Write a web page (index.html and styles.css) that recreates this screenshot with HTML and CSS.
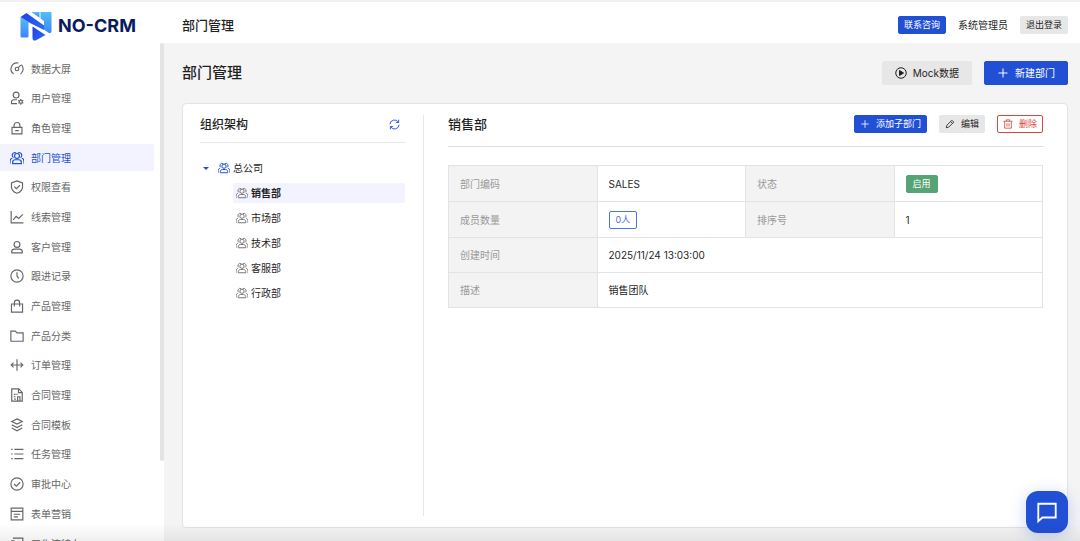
FILE: index.html
```html
<!DOCTYPE html>
<html lang="zh-CN">
<head>
    <meta charset="UTF-8">
    <meta name="viewport" content="width=device-width, initial-scale=1.0">
    <title>部门管理 - NO-CRM</title>
    <link rel="stylesheet" href="styles.css">
</head>
<body>

    <!-- 图标 -->
    <svg class="sprite" aria-hidden="true">
        <symbol id="i-dashboard" viewBox="0 0 24 24"><path d="M6 20.5A10.5 10.5 0 0 1 14.5 1.8M19.5 4.5A10.5 10.5 0 0 1 18 20.5M13.8 10.2L18.5 5.5"/><circle cx="12" cy="12" r="3"/></symbol>
        <symbol id="i-user-set" viewBox="0 0 24 24"><circle cx="10.5" cy="7" r="5"/><path d="M12 15H7c-3 0-4.500 2-4.500 4v2.500H12"/><circle cx="18.500" cy="18.500" r="2.600"/><path d="M18.500 13.500v2.400M18.500 21.100v2.400M14.200 16l2 1.200M20.800 19.800l2 1.200M14.200 21l2-1.200M20.800 17.200l2-1.200"/></symbol>
        <symbol id="i-lock" viewBox="0 0 24 24"><path d="M3.500 11h17v11h-17zM7 11V7.500a5 5 0 0 1 10 0V11M9 16.500h6"/></symbol>
        <symbol id="i-group" viewBox="0 0 24 24"><circle cx="12" cy="8.500" r="4.200"/><path d="M4.500 21.500v-2c0-2.500 2-4.500 4.500-4.500h6c2.500 0 4.500 2 4.500 4.500v2zM10.500 3.500A4.200 4.200 0 1 0 6 11M13.500 3.500A4.200 4.200 0 1 1 18 11M4 12.500C1.500 13 0 15 0 18v4M20 12.500c2.500.500 4 2.500 4 5.500v4"/></symbol>
        <symbol id="i-shield" viewBox="0 0 24 24"><path d="M12 1.500L21.500 5v6.500c0 5.500-4.500 9.500-9.500 11.200-5-1.700-9.500-5.700-9.500-11.200V5zM7.500 11.500l3.500 3.500 6-6"/></symbol>
        <symbol id="i-chart" viewBox="0 0 24 24"><path d="M2 1.500v20.500h21M5.500 17l5-6 4.500 3.500L22 7.500"/></symbol>
        <symbol id="i-user" viewBox="0 0 24 24"><circle cx="12" cy="7.500" r="5"/><path d="M3 22v-2.500c0-2.500 2-4 4.500-4h9c2.500 0 4.500 1.500 4.500 4V22z"/></symbol>
        <symbol id="i-time" viewBox="0 0 24 24"><circle cx="12" cy="12" r="10.500"/><path d="M12 5.500V12l3 4"/></symbol>
        <symbol id="i-bag" viewBox="0 0 24 24"><path d="M2.500 8.500h19v14h-19zM7.500 13V6.500a4.500 4.500 0 0 1 9 0V13"/></symbol>
        <symbol id="i-folder" viewBox="0 0 24 24"><path d="M1.500 3.500H9l3 3h10.500v14.500h-21z"/></symbol>
        <symbol id="i-order" viewBox="0 0 24 24"><path d="M12 2v20M1.500 12h21M6 8l-4 4 4 4M18 8l4 4-4 4"/></symbol>
        <symbol id="i-contract" viewBox="0 0 24 24"><path d="M3 1.500h12l6 6v15H3zM14.500 2v6H21M6.500 11h3M11 11h2M6.500 15h3M7 19h3M13 22v-7h4v7"/></symbol>
        <symbol id="i-layers" viewBox="0 0 24 24"><path d="M12 1.500l9 4.500-9 4.500L3 6zM3 11.500l9 5 9-5M3 17l9 5 9-5"/></symbol>
        <symbol id="i-list" viewBox="0 0 24 24"><path d="M7.500 4H23M7.500 12H23M7.500 20H23M2 4h2.500M2 12h2.500M2 20h2.500"/></symbol>
        <symbol id="i-check" viewBox="0 0 24 24"><circle cx="12" cy="12" r="10.500"/><path d="M7 12l3.800 3.800L17.500 9"/></symbol>
        <symbol id="i-form" viewBox="0 0 24 24"><path d="M2 2h20v20H2zM2 7.500h20M6.500 12.500h11M6.500 17h7"/></symbol>
        <symbol id="i-flow" viewBox="0 0 24 24"><path d="M5 2h17v20H5M2 6.500h6M2 17h6"/></symbol>
        <symbol id="i-play" viewBox="0 0 24 24"><circle cx="12" cy="12" r="10.500"/><path class="solid" d="M9 7l8 5-8 5z"/></symbol>
        <symbol id="i-plus" viewBox="0 0 24 24"><path d="M12 3v18M3 12h18"/></symbol>
        <symbol id="i-edit" viewBox="0 0 24 24"><path d="M3 21l1.500-6L16.500 3 21 7.500 9 19.500zM13.500 6l4.500 4.500"/></symbol>
        <symbol id="i-trash" viewBox="0 0 24 24"><path d="M1 5.500h22M4 5.500V22h16V5.500M8 5V2h8v3M9.500 10v8M14.500 10v8"/></symbol>
        <symbol id="i-refresh" viewBox="0 0 24 24"><path d="M2 11.500A10 10 0 0 1 20.500 7M22 12.500A10 10 0 0 1 3.500 17M21 1.500V7.500h-6M3 22.500v-6h6"/></symbol>
        <symbol id="i-chat" viewBox="0 0 24 24"><path d="M2.500 3h19v15H7l-4.500 4z"/></symbol>
    </svg>

    <div class="layout">
        <!-- 侧边栏 -->
        <aside class="sidebar">
            <a class="logo" href="#">
                <svg class="logo-mark" viewBox="0 0 32 30" aria-hidden="true">
                    <defs>
                        <linearGradient id="g1" x1="0" y1="0" x2="0" y2="1"><stop offset="0" stop-color="#55bdf8"/><stop offset="1" stop-color="#3a86f8"/></linearGradient>
                        <linearGradient id="g2" x1="0" y1="0" x2="1" y2="1"><stop offset="0" stop-color="#1b3fe8"/><stop offset="1" stop-color="#2f6cf3"/></linearGradient>
                    </defs>
                    <path fill="url(#g1)" d="M.5 6l8 5v14q0 1.500-1.500 1.500H2q-1.500 0-1.500-1.500z"/>
                    <path fill="url(#g1)" d="M10.500 1H19.500V7z"/>
                    <path fill="url(#g1)" d="M20.500 1h11v19q0 3-3 1.800L20.500 16z"/>
                    <path fill="#fff" d="M7 .5h3.500L24 10v5z"/>
                    <path fill="url(#g2)" d="M.5 6L6.500 2 24 14.500V19L10 12z"/>
                    <path fill="url(#g2)" d="M12.500 15.500L25.500 24l-9 5q-4 1.800-4-2z"/>
                </svg>
                <span>NO-CRM</span>
            </a>
            <nav class="menu-scroll">
                <ul class="menu">
                    <li><a href="#"><svg class="icon"><use href="#i-dashboard"/></svg>数据大屏</a></li>
                    <li><a href="#"><svg class="icon"><use href="#i-user-set"/></svg>用户管理</a></li>
                    <li><a href="#"><svg class="icon"><use href="#i-lock"/></svg>角色管理</a></li>
                    <li><a href="#" class="active"><svg class="icon"><use href="#i-group"/></svg>部门管理</a></li>
                    <li><a href="#"><svg class="icon"><use href="#i-shield"/></svg>权限查看</a></li>
                    <li><a href="#"><svg class="icon"><use href="#i-chart"/></svg>线索管理</a></li>
                    <li><a href="#"><svg class="icon"><use href="#i-user"/></svg>客户管理</a></li>
                    <li><a href="#"><svg class="icon"><use href="#i-time"/></svg>跟进记录</a></li>
                    <li><a href="#"><svg class="icon"><use href="#i-bag"/></svg>产品管理</a></li>
                    <li><a href="#"><svg class="icon"><use href="#i-folder"/></svg>产品分类</a></li>
                    <li><a href="#"><svg class="icon"><use href="#i-order"/></svg>订单管理</a></li>
                    <li><a href="#"><svg class="icon"><use href="#i-contract"/></svg>合同管理</a></li>
                    <li><a href="#"><svg class="icon"><use href="#i-layers"/></svg>合同模板</a></li>
                    <li><a href="#"><svg class="icon"><use href="#i-list"/></svg>任务管理</a></li>
                    <li><a href="#"><svg class="icon"><use href="#i-check"/></svg>审批中心</a></li>
                    <li><a href="#"><svg class="icon"><use href="#i-form"/></svg>表单营销</a></li>
                    <li><a href="#"><svg class="icon"><use href="#i-flow"/></svg>工作流特办</a></li>
                </ul>
                <span class="scroll-thumb"></span>
            </nav>
        </aside>

        <div class="main">
            <!-- 顶部栏 -->
            <header class="topbar">
                <span class="topbar-title">部门管理</span>
                <div class="topbar-right">
                    <button type="button" class="btn btn-small btn-primary">联系咨询</button>
                    <span>系统管理员</span>
                    <button type="button" class="btn btn-small">退出登录</button>
                </div>
            </header>

            <main class="content">
                <div class="page-head">
                    <h1>部门管理</h1>
                    <div class="page-actions">
                        <button type="button" class="btn"><svg class="icon"><use href="#i-play"/></svg>Mock数据</button>
                        <button type="button" class="btn btn-primary"><svg class="icon"><use href="#i-plus"/></svg>新建部门</button>
                    </div>
                </div>

                <div class="card">
                    <!-- 组织架构 -->
                    <section class="org">
                        <div class="org-head">
                            <h2>组织架构</h2>
                            <button type="button" class="btn-refresh" aria-label="刷新"><svg class="icon"><use href="#i-refresh"/></svg></button>
                        </div>
                        <ul class="tree">
                            <li>
                                <a href="#" class="node root"><span class="arrow"></span><svg class="icon"><use href="#i-group"/></svg>总公司</a>
                                <ul>
                                    <li><a href="#" class="node selected"><svg class="icon"><use href="#i-group"/></svg>销售部</a></li>
                                    <li><a href="#" class="node"><svg class="icon"><use href="#i-group"/></svg>市场部</a></li>
                                    <li><a href="#" class="node"><svg class="icon"><use href="#i-group"/></svg>技术部</a></li>
                                    <li><a href="#" class="node"><svg class="icon"><use href="#i-group"/></svg>客服部</a></li>
                                    <li><a href="#" class="node"><svg class="icon"><use href="#i-group"/></svg>行政部</a></li>
                                </ul>
                            </li>
                        </ul>
                    </section>

                    <!-- 部门详情 -->
                    <section class="detail">
                        <div class="detail-head">
                            <h2>销售部</h2>
                            <div class="detail-actions">
                                <button type="button" class="btn btn-small btn-primary"><svg class="icon"><use href="#i-plus"/></svg>添加子部门</button>
                                <button type="button" class="btn btn-small"><svg class="icon"><use href="#i-edit"/></svg>编辑</button>
                                <button type="button" class="btn btn-small btn-danger"><svg class="icon"><use href="#i-trash"/></svg>删除</button>
                            </div>
                        </div>
                        <table class="info">
                            <tr class="has-tag">
                                <th>部门编码</th><td>SALES</td>
                                <th>状态</th><td><span class="tag tag-success">启用</span></td>
                            </tr>
                            <tr class="has-tag">
                                <th>成员数量</th><td><span class="tag tag-outline">0人</span></td>
                                <th>排序号</th><td>1</td>
                            </tr>
                            <tr><th>创建时间</th><td colspan="3">2025/11/24 13:03:00</td></tr>
                            <tr><th>描述</th><td colspan="3">销售团队</td></tr>
                        </table>
                    </section>
                </div>
            </main>
        </div>
    </div>

    <button type="button" class="chat" aria-label="在线咨询"><svg class="icon"><use href="#i-chat"/></svg></button>

</body>
</html>
```
FILE: styles.css
```css
* {
    box-sizing: border-box;
}

body {
    margin: 0;
    background: #f4f4f4;
    color: #1f1f1f;
    font-family: Inter, "Noto Sans CJK SC", sans-serif;
    font-size: 10px;
    line-height: 16px;
}

/* 底部渐变 */
body::after {
    content: "";
    position: fixed;
    right: 0;
    bottom: 0;
    left: 0;
    height: 18px;
    background: linear-gradient(rgba(0, 0, 0, 0), rgba(0, 0, 0, 0.06));
    pointer-events: none;
}

h1, h2, ul {
    margin: 0;
    padding: 0;
}

h1, h2 {
    font-weight: 500;
}

ul {
    list-style: none;
}

a {
    color: inherit;
    text-decoration: none;
}

.sprite {
    display: none;
}

.icon {
    width: 14px;
    height: 14px;
    flex: none;
    fill: none;
    stroke: currentColor;
    stroke-width: 2;
}

.solid {
    fill: currentColor;
}

.layout {
    display: flex;
    height: 100vh;
    border-top: 2px solid #f1f1f1;
}

/* 侧边栏 */
.sidebar {
    display: flex;
    flex-direction: column;
    width: 164px;
    flex: none;
    background: #fff;
}

.logo {
    display: flex;
    align-items: center;
    gap: 6px;
    height: 41px;
    padding: 6px 0 0 20px;
    flex: none;
    color: #0a1a5c;
    font-size: 18px;
    font-weight: 700;
}

.logo-mark {
    width: 32px;
    height: 30px;
}

.menu-scroll {
    position: relative;
    flex: 1;
    min-height: 0;
    padding: 12px 10px 0 0;
    overflow: hidden;
}

.menu {
    display: flex;
    flex-direction: column;
    justify-content: space-between;
    height: 502px;
}

.menu a {
    display: flex;
    align-items: center;
    gap: 7px;
    height: 27px;
    padding-left: 10px;
    border-radius: 0 2px 2px 0;
    color: #666;
}

.menu a.active {
    background: #f2f3ff;
    color: #2150d4;
}

.menu .icon {
    overflow: visible;
}

.scroll-thumb {
    position: absolute;
    top: 0;
    right: 0;
    width: 4px;
    height: 84%;
    border-radius: 2px;
    background: #e3e3e3;
}

/* 顶部栏 */
.main {
    display: flex;
    flex-direction: column;
    flex: 1;
    min-width: 0;
}

.topbar {
    display: flex;
    align-items: center;
    justify-content: space-between;
    height: 41px;
    padding: 5px 12px 0 18px;
    background: #fff;
}

.topbar-title {
    font-size: 13px;
    font-weight: 500;
}

.topbar-right,
.page-actions,
.detail-actions {
    display: flex;
    align-items: center;
    gap: 12px;
}

/* 按钮 */
.btn {
    display: inline-flex;
    align-items: center;
    justify-content: center;
    gap: 6px;
    height: 24px;
    padding: 0 12px;
    border: 1px solid #e7e7e7;
    border-radius: 2px;
    background: #e7e7e7;
    color: #1f1f1f;
    font: inherit;
    cursor: pointer;
}

.btn .icon {
    width: 12px;
    height: 12px;
}

.btn-small {
    height: 18px;
    padding: 0 5px;
    font-size: 9px;
}

.btn-small .icon {
    width: 10px;
    height: 10px;
}

.btn-primary {
    border-color: #2150d4;
    background: #2150d4;
    color: #fff;
}

.btn-danger {
    border-color: #d54941;
    background: #fff;
    color: #d54941;
}

/* 内容 */
.content {
    display: flex;
    flex-direction: column;
    flex: 1;
    gap: 18px;
    padding: 18px 12px 13px 18px;
}

.page-head {
    display: flex;
    align-items: center;
    justify-content: space-between;
}

.page-head h1 {
    font-size: 15px;
}

.card {
    display: flex;
    flex: 1;
    padding: 11px 24px 11px 17px;
    border: 1px solid #e3e3e3;
    border-radius: 4px;
    background: #fff;
}

/* 组织架构 */
.org {
    width: 224px;
    flex: none;
    padding-right: 18px;
    border-right: 1px solid #e7e7e7;
}

.org-head {
    display: flex;
    align-items: center;
    justify-content: space-between;
    height: 28px;
    padding: 0 5px 8px 0;
    border-bottom: 1px solid #e7e7e7;
}

.org-head h2 {
    font-size: 12px;
}

.btn-refresh {
    display: flex;
    padding: 0;
    border: 0;
    background: none;
    color: #2150d4;
    cursor: pointer;
}

.btn-refresh .icon {
    width: 11px;
    height: 11px;
}

.tree {
    padding-top: 15px;
}

.tree ul {
    padding-left: 33px;
}

.node {
    display: flex;
    align-items: center;
    gap: 3px;
    height: 20px;
    margin-bottom: 5px;
    padding-left: 3px;
    border-radius: 2px;
}

.node .icon {
    width: 12px;
    height: 12px;
    overflow: visible;
    color: #777;
}

.node.root .icon {
    color: #2150d4;
}

.node.selected {
    background: #f2f3ff;
    font-weight: 600;
}

.arrow {
    margin-right: 6px;
    border: 3px solid transparent;
    border-top-color: #2150d4;
    border-bottom: 0;
}

/* 部门详情 */
.detail {
    flex: 1;
    min-width: 0;
    padding-left: 24px;
}

.detail-head {
    display: flex;
    align-items: center;
    justify-content: space-between;
    height: 32px;
    padding-bottom: 13px;
    border-bottom: 1px solid #ddd;
}

.detail-head h2 {
    font-size: 13px;
}

.info {
    width: 100%;
    margin-top: 18px;
    border-collapse: collapse;
    table-layout: fixed;
}

.info tr {
    height: 35px;
}

.info .has-tag {
    height: 36px;
}

.info th,
.info td {
    padding: 8px 11px;
    border: 1px solid #e3e3e3;
    font-weight: 400;
    text-align: left;
}

.info th {
    background: #f3f3f3;
    color: #999;
}

.tag {
    display: inline-block;
    padding: 0 6px;
    border: 1px solid;
    border-radius: 2px;
    font-size: 9px;
}

.tag-success {
    border-color: #56a376;
    background: #56a376;
    color: #fff;
}

.tag-outline {
    border-color: #4a75e0;
    color: #4a75e0;
}

/* 在线咨询 */
.chat {
    position: fixed;
    right: 12px;
    bottom: 8px;
    display: flex;
    align-items: center;
    justify-content: center;
    width: 42px;
    height: 42px;
    padding: 0;
    border: 0;
    border-radius: 12px;
    background: #2150d4;
    box-shadow: 0 3px 16px rgba(33, 80, 212, 0.25);
    color: #fff;
    cursor: pointer;
}

.chat .icon {
    width: 22px;
    height: 22px;
}
```
